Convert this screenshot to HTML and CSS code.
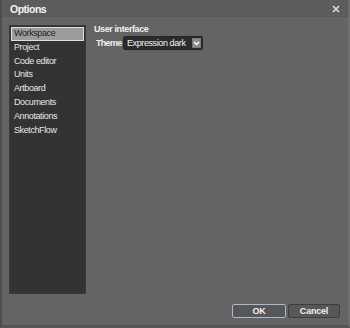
FILE: index.html
```html
<!DOCTYPE html>
<html lang="en">
<head>
    <meta charset="UTF-8">
    <title>Options</title>
    <link rel="stylesheet" href="styles.css">
</head>
<body>
    <div class="window">
        <div class="titlebar">
            <span class="title">Options</span>
            <svg class="close" width="8" height="8" viewBox="0 0 8 8">
                <path d="M1 1 L7 7 M7 1 L1 7" stroke="#dcdcdc" stroke-width="1.7"/>
            </svg>
        </div>
        <div class="main">
            <ul class="nav">
                <li class="selected">Workspace</li>
                <li>Project</li>
                <li>Code editor</li>
                <li>Units</li>
                <li>Artboard</li>
                <li>Documents</li>
                <li>Annotations</li>
                <li>SketchFlow</li>
            </ul>
            <div class="panel">
                <div class="section">User interface</div>
                <div class="row">
                    <span class="label">Theme</span>
                    <div class="select">
                        <span class="value">Expression dark</span>
                        <span class="arrow">
                            <svg width="7" height="5" viewBox="0 0 7 5">
                                <path d="M1 1 L3.5 3.5 L6 1" stroke="#fff" stroke-width="1.5" fill="none"/>
                            </svg>
                        </span>
                    </div>
                </div>
            </div>
        </div>
        <div class="buttons">
            <button class="btn default">OK</button>
            <button class="btn cancel">Cancel</button>
        </div>
    </div>
</body>
</html>
```

FILE: styles.css
```css
html, body { margin: 0; padding: 0; }
body { font-family: "Liberation Sans", Arial, sans-serif; font-size: 9px; letter-spacing: -0.4px; background: #3c3c3c; }
.window { width: 350px; height: 328px; box-sizing: border-box; background: #646464; border-left: 2px solid #4e4e4e; border-right: 2px solid #6e6e6e; border-bottom: 3px solid #555; display: flex; flex-direction: column; }
.titlebar { height: 16px; background: #5c5c5c; display: flex; align-items: center; justify-content: space-between; padding: 0 8px 0 8px; border-bottom: 1px solid #595959; }
.title { color: #f4f4f4; font-weight: bold; font-size: 10.5px; letter-spacing: -0.5px; margin-top: 2px; }
.close { margin-top: 2px; }
.main { flex: 1; display: flex; padding: 9px 0 0 8px; }
.nav { list-style: none; margin: 0; padding: 1px 1px 0 1px; width: 75px; height: 267px; background: #333; box-sizing: border-box; box-shadow: 0 0 0 1px #3a3a3a; }
.nav li { color: #e6e6e6; height: 13.8px; line-height: 13.8px; padding-left: 3px; white-space: nowrap; box-sizing: border-box; }
.nav li.selected { background: #9c9c9c; color: #1e1e1e; border: 1px solid #dedede; line-height: 11.8px; padding-left: 2px; }
.panel { padding: 0 0 0 9px; margin-top: -1px; }
.section { color: #f0f0f0; font-weight: bold; height: 10px; line-height: 8px; }
.row { display: flex; align-items: center; margin-top: 1px; padding-left: 2px; }
.label { color: #f0f0f0; font-weight: bold; width: 27px; letter-spacing: -0.7px; white-space: nowrap; }
.select { width: 80px; height: 14px; background: #2b2b2b; border: 1px solid #252525; border-radius: 2px; display: flex; align-items: center; justify-content: space-between; box-sizing: border-box; padding-right: 1px; }
.value { color: #f2f2f2; padding-left: 3px; white-space: nowrap; }
.arrow { width: 9px; height: 10px; background: #8c8c8c; border: 1px solid #7a7a7a; box-sizing: border-box; display: flex; align-items: center; justify-content: center; }
.buttons { display: flex; justify-content: flex-end; gap: 2px; padding: 0 8px 7px 0; }
.btn { width: 54px; height: 14px; background: #575757; border: 1px solid #3e3e3e; border-radius: 2px; color: #f0f0f0; font-family: inherit; font-size: 9px; font-weight: bold; letter-spacing: -0.2px; padding: 0; }
.btn.default { border-color: #a4bcd0; }
.btn.cancel { width: 52px; }
```
